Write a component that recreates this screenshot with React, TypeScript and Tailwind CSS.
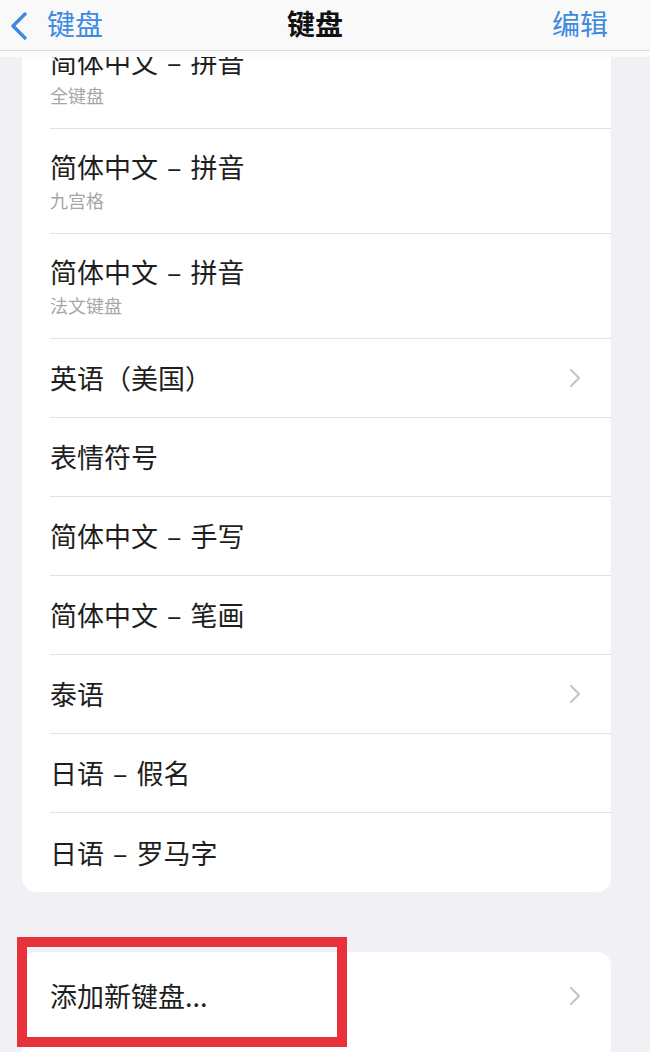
import React from "react";

// 键盘列表的一行
interface Row {
    title: string;
    sub?: string;
    arrow?: boolean;
}

const rows: Row[] = [
    { title: "简体中文 – 拼音", sub: "全键盘" },
    { title: "简体中文 – 拼音", sub: "九宫格" },
    { title: "简体中文 – 拼音", sub: "法文键盘" },
    { title: "英语（美国）", arrow: true },
    { title: "表情符号" },
    { title: "简体中文 – 手写" },
    { title: "简体中文 – 笔画" },
    { title: "泰语", arrow: true },
    { title: "日语 – 假名" },
    { title: "日语 – 罗马字" },
];

const font = { fontFamily: '"Noto Sans CJK SC", "Noto Sans", sans-serif' };

function Chevron() {
    return (
        <svg width="12" height="20" viewBox="0 0 12 20" className="shrink-0">
            <polyline points="2,2 10,10 2,18" fill="none" stroke="#c5c5c9" strokeWidth="2.2" strokeLinecap="round" strokeLinejoin="round" />
        </svg>
    );
}

// 标题里的 " – " 两边留得比默认空格宽一点
function Title({ text }: { text: string }) {
    const parts = text.split(" – ");
    if (parts.length < 2) return <>{text}</>;
    return (
        <>
            {parts[0]}
            <span className="mx-[3px]"> – </span>
            {parts[1]}
        </>
    );
}

export default function App() {
    return (
        <div className="w-[650px] h-[1052px] overflow-hidden bg-[#f1f1f5] flex flex-col" style={font}>
            {/* Navigation bar */}
            <div className="relative z-10 shrink-0 bg-[#f9f9fa]">
                <div className="h-[51px] border-b border-[#dcdcdf] flex items-center pl-[10px] pr-[42px]">
                    <div className="w-[200px] flex items-center text-[#3f8ae0] text-[28px] leading-none">
                        <svg width="18" height="28" viewBox="0 0 18 28" className="mt-[2px]">
                            <polyline points="15,2 3,14 15,26" fill="none" stroke="#3f8ae0" strokeWidth="3.4" strokeLinecap="round" strokeLinejoin="round" />
                        </svg>
                        <span className="ml-[19px] -mt-[4px]">键盘</span>
                    </div>
                    <div className="flex-1 text-center font-bold text-[28px] leading-none text-[#111] -mt-[4px] pl-[12px]">键盘</div>
                    <div className="w-[200px] text-right text-[#3f8ae0] text-[28px] leading-none -mt-[4px]">编辑</div>
                </div>
                <div className="h-[6px] bg-[#fbfbfc]" />
            </div>

            {/* Keyboard list */}
            <div className="px-[22px] pr-[39px] -mt-[33px]">
                <div className="bg-white rounded-[14px] overflow-hidden">
                    {rows.map((r, i) => (
                        <div key={i} className="pl-[28px]">
                            <div
                                className={
                                    "flex items-center justify-between pr-[30px] " +
                                    (i < rows.length - 1 ? "border-b border-[#e2e2e4] " : "") +
                                    (r.sub ? "h-[105px]" : "h-[79px]")
                                }
                            >
                                <div className="flex flex-col">
                                    <span className="text-[27px] leading-[32px] text-[#1e1e20]">
                                        <Title text={r.title} />
                                    </span>
                                    {r.sub && <span className="text-[18px] leading-[22px] mt-[6px] text-[#a6a6aa]">{r.sub}</span>}
                                </div>
                                {r.arrow && <Chevron />}
                            </div>
                        </div>
                    ))}
                </div>

                {/* Add new keyboard */}
                <div className="relative mt-[60px]">
                    <div className="bg-white rounded-[14px] h-[120px] flex items-start pl-[28px] pr-[30px]">
                        <div className="h-[88px] w-full flex items-center justify-between">
                            <span className="text-[27px] leading-[32px] text-[#1e1e20]">添加新键盘...</span>
                            <Chevron />
                        </div>
                    </div>
                    <div className="absolute left-[-5px] top-[-15px] w-[330px] h-[110px] border-[10px] border-[#e8323b]" />
                </div>
            </div>
        </div>
    );
}
